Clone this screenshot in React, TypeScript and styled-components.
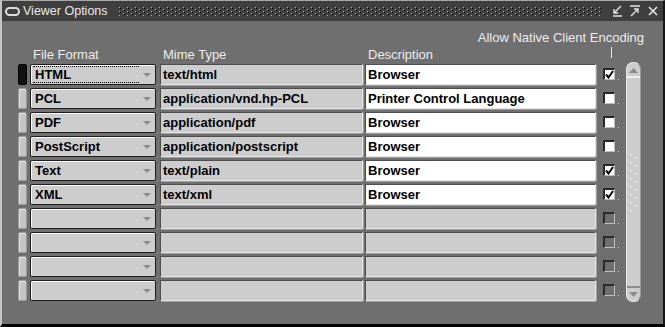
import React from 'react';
import styled, { createGlobalStyle } from 'styled-components';

type ViewerRecord = { format: string; mime: string; desc: string; native: boolean };

const records: ViewerRecord[] = [
  { format: 'HTML', mime: 'text/html', desc: 'Browser', native: true },
  { format: 'PCL', mime: 'application/vnd.hp-PCL', desc: 'Printer Control Language', native: false },
  { format: 'PDF', mime: 'application/pdf', desc: 'Browser', native: false },
  { format: 'PostScript', mime: 'application/postscript', desc: 'Browser', native: false },
  { format: 'Text', mime: 'text/plain', desc: 'Browser', native: true },
  { format: 'XML', mime: 'text/xml', desc: 'Browser', native: true },
];

const EMPTY_ROWS = 4;

const App = () => {
  return (
    <>
      <GlobalStyle />
      <Window>
        <TitleBar>
          <AppIcon />
          <Title>Viewer Options</Title>
          <Grip />
          <TitleButtons>
            <svg width="12" height="12" viewBox="0 0 12 12">
              <path d="M10 1 L3 8 M3 4 V8 H7 M2 11 H11" stroke="#e4e4e4" strokeWidth="1.4" fill="none" />
            </svg>
            <svg width="12" height="12" viewBox="0 0 12 12">
              <path d="M1 1 H11 M2 11 L9 4 M5 4 H9 V8" stroke="#e4e4e4" strokeWidth="1.4" fill="none" />
            </svg>
            <svg width="12" height="12" viewBox="0 0 12 12">
              <path d="M2 2 L10 10 M10 2 L2 10" stroke="#e4e4e4" strokeWidth="1.6" fill="none" />
            </svg>
          </TitleButtons>
        </TitleBar>

        <Body>
          <NativeLabel>Allow Native Client Encoding</NativeLabel>
          <HeaderRow>
            <IndicatorSpacer />
            <HeaderCell $width={126} $gap={4}>File Format</HeaderCell>
            <HeaderCell $width={203} $gap={2}>Mime Type</HeaderCell>
            <HeaderCell $width={231} $gap={7}>Description</HeaderCell>
            <Tick />
          </HeaderRow>

          <Content>
            <Rows>
              {records.map((r, i) => (
                <Row key={r.format}>
                  <Indicator $current={i === 0} />
                  <Combo>
                    <ComboValue $focused={i === 0}>{r.format}</ComboValue>
                    <Arrow />
                  </Combo>
                  <Field $width={203} $gap={2}>{r.mime}</Field>
                  <Field $width={231} $gap={7} $editable>{r.desc}</Field>
                  <CheckCell>
                    <Box $filled>
                      {r.native && (
                        <svg width="9" height="9" viewBox="0 0 9 9">
                          <path d="M1 4.5 L3.5 7.5 L8 1" stroke="#000" strokeWidth="2" fill="none" />
                        </svg>
                      )}
                    </Box>
                    <Dot />
                  </CheckCell>
                </Row>
              ))}
              {Array.from({ length: EMPTY_ROWS }).map((_, i) => (
                <Row key={`empty-${i}`}>
                  <Indicator />
                  <Combo>
                    <ComboValue />
                    <Arrow />
                  </Combo>
                  <Field $width={203} $gap={2} />
                  <Field $width={231} $gap={7} />
                  <CheckCell>
                    <Box />
                    <Dot />
                  </CheckCell>
                </Row>
              ))}
            </Rows>

            <Scrollbar>
              <ScrollEnd>
                <svg width="9" height="5" viewBox="0 0 9 5">
                  <path d="M0 5 L4.5 0 L9 5 Z" fill="#8a8a8a" />
                </svg>
              </ScrollEnd>
              <Track>
                <Grips />
              </Track>
              <ScrollEnd $bottom>
                <svg width="9" height="5" viewBox="0 0 9 5">
                  <path d="M0 0 L4.5 5 L9 0 Z" fill="#8a8a8a" />
                </svg>
              </ScrollEnd>
            </Scrollbar>
          </Content>
        </Body>
      </Window>
    </>
  );
};

const GlobalStyle = createGlobalStyle`
  html, body {
    margin: 0;
    padding: 0;
    background: #6f6f6f;
  }
  * {
    box-sizing: border-box;
  }
`;

const Window = styled.div`
  width: 665px;
  height: 327px;
  display: flex;
  flex-direction: column;
  background: #6f6f6f;
  border-top: 1px solid #a8a8a8;
  border-left: 2px solid #c6c6c6;
  border-right: 2px solid #161616;
  border-bottom: 3px solid #000;
  font-family: 'Liberation Sans', Arial, sans-serif;
  overflow: hidden;
`;

const TitleBar = styled.div`
  height: 20px;
  flex: none;
  display: flex;
  align-items: center;
  background: #3f3f3f;
  padding: 0 4px 0 3px;
`;

const AppIcon = styled.span`
  width: 15px;
  height: 9px;
  border: 2px solid #dcdcdc;
  border-radius: 5px;
  margin-right: 3px;
`;

const Title = styled.span`
  font-size: 12.5px;
  color: #e8e8e8;
  white-space: nowrap;
`;

const Grip = styled.div`
  flex: 1;
  height: 9px;
  margin: 0 10px 0 11px;
  background-image: conic-gradient(at 1px 1px, transparent 75%, #b4b4b4 0),
    conic-gradient(at 1px 1px, transparent 75%, #000 0),
    conic-gradient(at 1px 1px, transparent 75%, #b4b4b4 0),
    conic-gradient(at 1px 1px, transparent 75%, #000 0);
  background-size: 8px 4px;
  background-position: 0 0, 1px 1px, 4px 2px, 5px 3px;
`;

const TitleButtons = styled.div`
  display: flex;
  gap: 6px;
  align-items: center;
`;

const Body = styled.div`
  flex: 1;
  display: flex;
  flex-direction: column;
  padding: 9px 0 0 16px;
`;

const NativeLabel = styled.div`
  align-self: flex-end;
  margin-right: 19px;
  font-size: 13px;
  line-height: 15px;
  color: #ececec;
  white-space: nowrap;
`;

const HeaderRow = styled.div`
  display: flex;
  height: 15px;
  margin: 2px 0 0;
`;

const IndicatorSpacer = styled.div`
  width: 12px;
`;

const HeaderCell = styled.div<{ $width: number; $gap: number }>`
  width: ${(p) => p.$width}px;
  margin-right: ${(p) => p.$gap}px;
  padding-left: 3px;
  font-size: 13px;
  line-height: 15px;
  color: #ececec;
  white-space: nowrap;
`;

const Tick = styled.div`
  width: 1px;
  height: 11px;
  margin-left: 8px;
  background: #e6e6e6;
`;

const Content = styled.div`
  display: flex;
  align-items: flex-start;
`;

const Rows = styled.div`
  display: flex;
  flex-direction: column;
  gap: 3px;
  padding-top: 2px;
`;

const Row = styled.div`
  display: flex;
  height: 21px;
`;

const Indicator = styled.div<{ $current?: boolean }>`
  width: 9px;
  margin-right: 3px;
  border-radius: 2px;
  background: ${(p) => (p.$current ? '#111' : '#c4c4c4')};
  border: 1px solid ${(p) => (p.$current ? '#000' : '#9a9a9a')};
  box-shadow: ${(p) => (p.$current ? 'none' : 'inset 1px 1px 0 #e2e2e2')};
`;

const Combo = styled.div`
  width: 126px;
  margin-right: 4px;
  display: flex;
  align-items: center;
  padding: 1px 4px 1px 2px;
  background: #cdcdcd;
  border: 1px solid #1e1e1e;
  border-radius: 2px;
  box-shadow: inset 1px 1px 0 #fafafa;
`;

const ComboValue = styled.div<{ $focused?: boolean }>`
  flex: 1;
  height: 17px;
  padding-left: 2px;
  font-size: 13px;
  font-weight: bold;
  line-height: 15px;
  color: #000;
  border-top: 1px dotted ${(p) => (p.$focused ? '#000' : 'transparent')};
  border-bottom: 1px dotted ${(p) => (p.$focused ? '#000' : 'transparent')};
  white-space: nowrap;
`;

const Arrow = styled.span`
  width: 0;
  height: 0;
  margin-left: 4px;
  border-left: 4px solid transparent;
  border-right: 4px solid transparent;
  border-top: 4px solid #8c8c8c;
`;

const Field = styled.div<{ $width: number; $gap: number; $editable?: boolean }>`
  width: ${(p) => p.$width}px;
  margin-right: ${(p) => p.$gap}px;
  padding-left: 2px;
  background: ${(p) => (p.$editable ? '#fff' : '#cdcdcd')};
  border-top: 1px solid #4e4e4e;
  border-left: 1px solid #4e4e4e;
  border-right: 1px solid #e4e4e4;
  border-bottom: 1px solid #e4e4e4;
  border-bottom-right-radius: 2px;
  box-shadow: 1px 1px 0 #a0a0a0;
  font-size: 13px;
  font-weight: bold;
  line-height: 19px;
  color: #000;
  white-space: nowrap;
  overflow: hidden;
`;

const CheckCell = styled.div`
  width: 20px;
  display: flex;
  align-items: flex-start;
  padding-top: 4px;
`;

const Box = styled.div<{ $filled?: boolean }>`
  width: 12px;
  height: 12px;
  display: flex;
  align-items: center;
  justify-content: center;
  background: ${(p) => (p.$filled ? '#fff' : 'transparent')};
  border-top: 2px solid #2a2a2a;
  border-left: 2px solid #2a2a2a;
  border-right: 1px solid #bcbcbc;
  border-bottom: 1px solid #bcbcbc;
`;

const Dot = styled.span`
  width: 1px;
  height: 1px;
  margin: 11px 0 0 3px;
  background: #d8d8d8;
`;

const Scrollbar = styled.div`
  width: 15px;
  height: 240px;
  margin-left: 3px;
  display: flex;
  flex-direction: column;
  background: #cdcdcd;
  border: 1px solid #e8e8e8;
  border-right-color: #9a9a9a;
  border-radius: 7px;
  overflow: hidden;
`;

const ScrollEnd = styled.div<{ $bottom?: boolean }>`
  height: 15px;
  flex: none;
  display: flex;
  align-items: center;
  justify-content: center;
  border-bottom: ${(p) => (p.$bottom ? 'none' : '2px solid #ededed')};
  border-top: ${(p) => (p.$bottom ? '2px solid #8a8a8a' : 'none')};
  padding-top: ${(p) => (p.$bottom ? '0' : '2px')};
`;

const Track = styled.div`
  flex: 1;
  display: flex;
  align-items: center;
  justify-content: center;
`;

const Grips = styled.div`
  width: 8px;
  height: 58px;
  margin-top: 2px;
  background-image: conic-gradient(at 2px 1px, transparent 75%, #f4f4f4 0),
    conic-gradient(at 2px 1px, transparent 75%, #f4f4f4 0);
  background-size: 8px 8px;
  background-position: 0 0, 5px 3px;
`;

export default App;
